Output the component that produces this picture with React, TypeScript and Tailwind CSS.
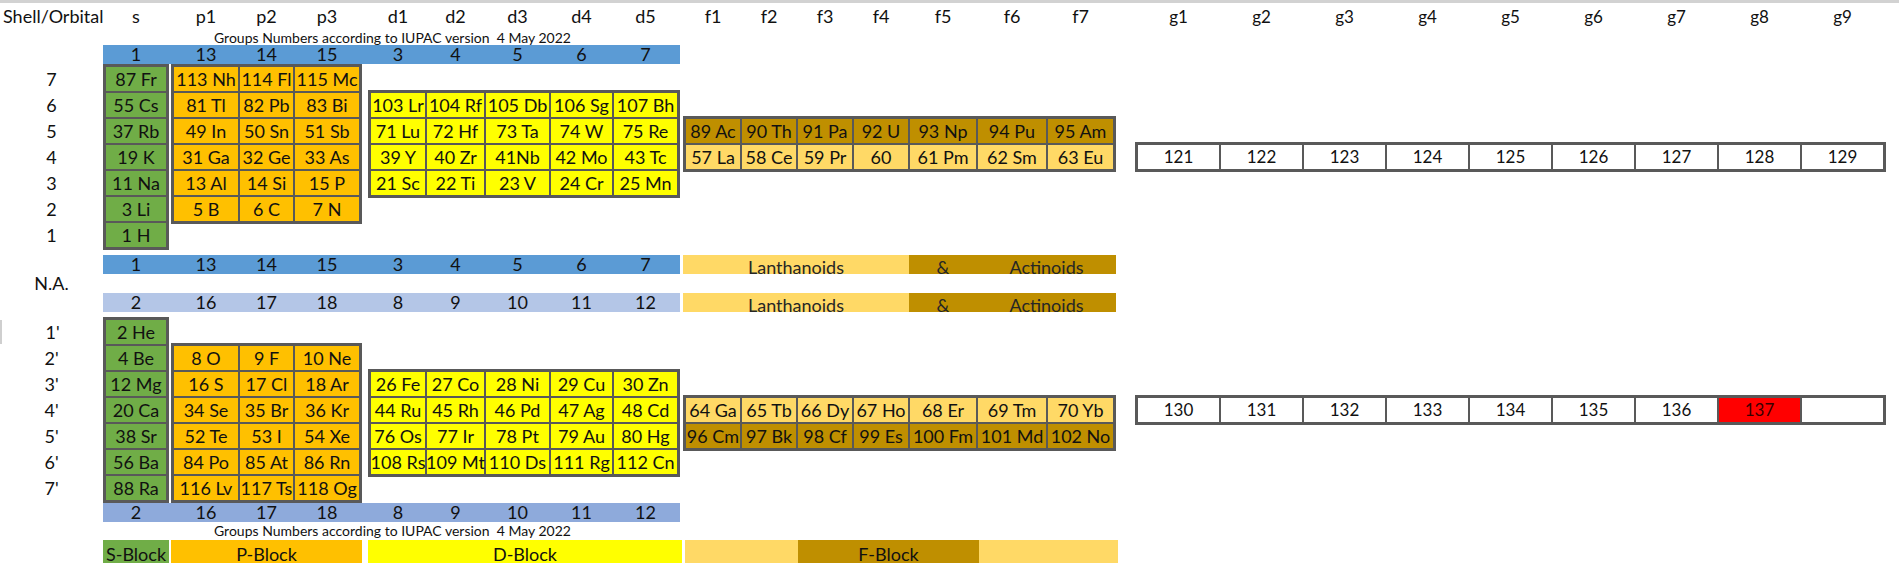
import { clsx } from "clsx";

// column widths (cell interiors) per block — shared by boxes, headers and bars
const S = ["w-[60px]"];
const P = ["w-[64px]", "w-[53px]", "w-[64px]"];
const D = ["w-[54px]", "w-[57px]", "w-[63px]", "w-[61px]", "w-[63px]"];
const F = ["w-[54px]", "w-[54px]", "w-[54px]", "w-[54px]", "w-[66px]", "w-[68px]", "w-[65px]"];
const G = Array(9).fill("w-[81px]");

const CAPTION = "Groups Numbers according to IUPAC version  4 May 2022";

function Labels({
  cols,
  items,
  className,
}: {
  cols: string[];
  items: string[];
  className?: string;
}) {
  return (
    <div className={clsx("flex gap-[2px] px-[3px]", className)}>
      {cols.map((w, i) => (
        <div key={i} className={clsx(w, "text-center whitespace-nowrap")}>
          {items[i]}
        </div>
      ))}
    </div>
  );
}

function Box({
  cols,
  rows,
  fills,
  className,
  textClass,
  highlight,
}: {
  cols: string[];
  rows: string[][];
  fills: string[];
  className?: string;
  textClass?: string;
  highlight?: number;
}) {
  return (
    <div className={clsx("flex flex-col gap-[2px] bg-[#595959] p-[3px]", className)}>
      {rows.map((r, ri) => (
        <div key={ri} className="flex gap-[2px]">
          {r.map((t, ci) => (
            <div
              key={ci}
              className={clsx(
                cols[ci],
                "flex h-[24px] items-center justify-center whitespace-nowrap",
                highlight === ci ? "bg-[#ff0000] text-[#3a0000]" : fills[ri],
                textClass
              )}
            >
              {t}
            </div>
          ))}
        </div>
      ))}
    </div>
  );
}

function RowLabels({ labels }: { labels: string[] }) {
  return (
    <div className="flex w-[103px] shrink-0 flex-col gap-[2px] pt-[3px]">
      {labels.map((l, i) => (
        <div
          key={l}
          className={clsx(
            "flex h-[24px] items-center justify-center",
            i === 0 && l.endsWith("'") && "border-l-2 border-[#cfcfcf]"
          )}
        >
          {l}
        </div>
      ))}
    </div>
  );
}

function GroupBar({ bg, nums }: { bg: string; nums: string[] }) {
  return (
    <div className={clsx("flex h-[19px] leading-[19px]", bg)}>
      <Labels cols={S} items={nums.slice(0, 1)} />
      <Labels cols={P} items={nums.slice(1, 4)} className="ml-[2px]" />
      <Labels cols={D} items={nums.slice(4)} className="ml-[6px]" />
    </div>
  );
}

function LanActBar() {
  return (
    <div className="ml-[3px] flex h-[19px] overflow-hidden leading-[19px] text-[#262626]">
      <div className="w-[226px] bg-[#ffd966] text-center">
        <span className="relative top-[3px]">Lanthanoids</span>
      </div>
      <div className="flex w-[207px] bg-[#bf8f00]">
        <div className="w-[68px] text-center">
          <span className="relative top-[3px]">&amp;</span>
        </div>
        <div className="flex-1 text-center">
          <span className="relative top-[3px]">Actinoids</span>
        </div>
      </div>
    </div>
  );
}

const green = "bg-[#70ad47]";
const orange = "bg-[#ffc000]";
const yellow = "bg-[#ffff00]";
const lan = "bg-[#ffd966]";
const act = "bg-[#bf8f00]";
const white = "bg-white";

export default function App() {
  return (
    <div className="h-[569px] w-[1899px] overflow-hidden bg-white font-[Lato,'Noto_Sans',sans-serif] text-[18px] text-[#111]">
      <div className="h-[3px] bg-[#d2d2d2]" />

      {/* Orbital header */}
      <div className="flex h-[27px] items-center">
        <div className="w-[103px] shrink-0 pl-[3px]">Shell/Orbital</div>
        <Labels cols={S} items={["s"]} />
        <Labels cols={P} items={["p1", "p2", "p3"]} className="ml-[2px]" />
        <Labels cols={D} items={["d1", "d2", "d3", "d4", "d5"]} className="ml-[6px]" />
        <Labels cols={F} items={["f1", "f2", "f3", "f4", "f5", "f6", "f7"]} className="ml-[3px]" />
        <Labels
          cols={G}
          items={["g1", "g2", "g3", "g4", "g5", "g6", "g7", "g8", "g9"]}
          className="ml-[19px] text-[17px]"
        />
      </div>
      <div className="ml-[103px] h-[15px] w-[579px] text-center text-[14px] leading-[15px] whitespace-pre">
        {CAPTION}
      </div>
      <div className="ml-[103px] w-fit">
        <GroupBar bg="bg-[#5b9bd5]" nums={["1", "13", "14", "15", "3", "4", "5", "6", "7"]} />
      </div>

      {/* Upper shells */}
      <div className="flex items-start">
        <RowLabels labels={["7", "6", "5", "4", "3", "2", "1"]} />
        <Box
          cols={S}
          fills={Array(7).fill(green)}
          rows={[["87 Fr"], ["55 Cs"], ["37 Rb"], ["19 K"], ["11 Na"], ["3 Li"], ["1 H"]]}
        />
        <Box
          cols={P}
          className="ml-[2px]"
          fills={Array(6).fill(orange)}
          rows={[
            ["113 Nh", "114 Fl", "115 Mc"],
            ["81 Tl", "82 Pb", "83 Bi"],
            ["49 In", "50 Sn", "51 Sb"],
            ["31 Ga", "32 Ge", "33 As"],
            ["13 Al", "14 Si", "15 P"],
            ["5 B", "6 C", "7 N"],
          ]}
        />
        <Box
          cols={D}
          className="ml-[6px] mt-[26px]"
          fills={Array(4).fill(yellow)}
          rows={[
            ["103 Lr", "104 Rf", "105 Db", "106 Sg", "107 Bh"],
            ["71 Lu", "72 Hf", "73 Ta", "74 W", "75 Re"],
            ["39 Y", "40 Zr", "41Nb", "42 Mo", "43 Tc"],
            ["21 Sc", "22 Ti", "23 V", "24 Cr", "25 Mn"],
          ]}
        />
        <Box
          cols={F}
          className="ml-[3px] mt-[52px]"
          fills={[act, lan]}
          rows={[
            ["89 Ac", "90 Th", "91 Pa", "92 U", "93 Np", "94 Pu", "95 Am"],
            ["57 La", "58 Ce", "59 Pr", "60", "61 Pm", "62 Sm", "63 Eu"],
          ]}
        />
        <Box
          cols={G}
          className="ml-[19px] mt-[78px]"
          textClass="text-[17px]"
          fills={[white]}
          rows={[["121", "122", "123", "124", "125", "126", "127", "128", "129"]]}
        />
      </div>

      {/* Group number bars */}
      <div className="mt-[5px] flex">
        <div className="flex w-[103px] shrink-0 items-center justify-center">N.A.</div>
        <div className="flex flex-col">
          <div className="flex">
            <GroupBar bg="bg-[#5b9bd5]" nums={["1", "13", "14", "15", "3", "4", "5", "6", "7"]} />
            <LanActBar />
          </div>
          <div className="h-[19px]" />
          <div className="flex">
            <GroupBar bg="bg-[#b4c6e7]" nums={["2", "16", "17", "18", "8", "9", "10", "11", "12"]} />
            <LanActBar />
          </div>
        </div>
      </div>

      {/* Lower shells */}
      <div className="mt-[5px] flex items-start">
        <RowLabels labels={["1'", "2'", "3'", "4'", "5'", "6'", "7'"]} />
        <Box
          cols={S}
          fills={Array(7).fill(green)}
          rows={[["2 He"], ["4 Be"], ["12 Mg"], ["20 Ca"], ["38 Sr"], ["56 Ba"], ["88 Ra"]]}
        />
        <Box
          cols={P}
          className="ml-[2px] mt-[26px]"
          fills={Array(6).fill(orange)}
          rows={[
            ["8 O", "9 F", "10 Ne"],
            ["16 S", "17 Cl", "18 Ar"],
            ["34 Se", "35 Br", "36 Kr"],
            ["52 Te", "53 I", "54 Xe"],
            ["84 Po", "85 At", "86 Rn"],
            ["116 Lv", "117 Ts", "118 Og"],
          ]}
        />
        <Box
          cols={D}
          className="ml-[6px] mt-[52px]"
          fills={Array(4).fill(yellow)}
          rows={[
            ["26 Fe", "27 Co", "28 Ni", "29 Cu", "30 Zn"],
            ["44 Ru", "45 Rh", "46 Pd", "47 Ag", "48 Cd"],
            ["76 Os", "77 Ir", "78 Pt", "79 Au", "80 Hg"],
            ["108 Rs", "109 Mt", "110 Ds", "111 Rg", "112 Cn"],
          ]}
        />
        <Box
          cols={F}
          className="ml-[3px] mt-[78px]"
          fills={[lan, act]}
          rows={[
            ["64 Ga", "65 Tb", "66 Dy", "67 Ho", "68 Er", "69 Tm", "70 Yb"],
            ["96 Cm", "97 Bk", "98 Cf", "99 Es", "100 Fm", "101 Md", "102 No"],
          ]}
        />
        <Box
          cols={G}
          className="ml-[19px] mt-[78px]"
          textClass="text-[17px]"
          fills={[white]}
          highlight={7}
          rows={[["130", "131", "132", "133", "134", "135", "136", "137", ""]]}
        />
      </div>

      <div className="ml-[103px] w-fit">
        <GroupBar bg="bg-[#8eaadb]" nums={["2", "16", "17", "18", "8", "9", "10", "11", "12"]} />
      </div>
      <div className="ml-[103px] h-[18px] w-[579px] text-center text-[14px] leading-[18px] whitespace-pre">
        {CAPTION}
      </div>

      {/* Block legend */}
      <div className="ml-[103px] flex h-[23px] overflow-hidden leading-[23px]">
        <div className="w-[66px] bg-[#70ad47] text-center whitespace-nowrap">
          <span className="relative top-[3px]">S-Block</span>
        </div>
        <div className="ml-[2px] w-[191px] bg-[#ffc000] text-center">
          <span className="relative top-[3px]">P-Block</span>
        </div>
        <div className="ml-[6px] w-[314px] bg-[#ffff00] text-center">
          <span className="relative top-[3px]">D-Block</span>
        </div>
        <div className="ml-[3px] w-[113px] bg-[#ffd966]" />
        <div className="w-[181px] bg-[#bf8f00] text-center">
          <span className="relative top-[3px]">F-Block</span>
        </div>
        <div className="w-[139px] bg-[#ffd966]" />
      </div>
    </div>
  );
}
